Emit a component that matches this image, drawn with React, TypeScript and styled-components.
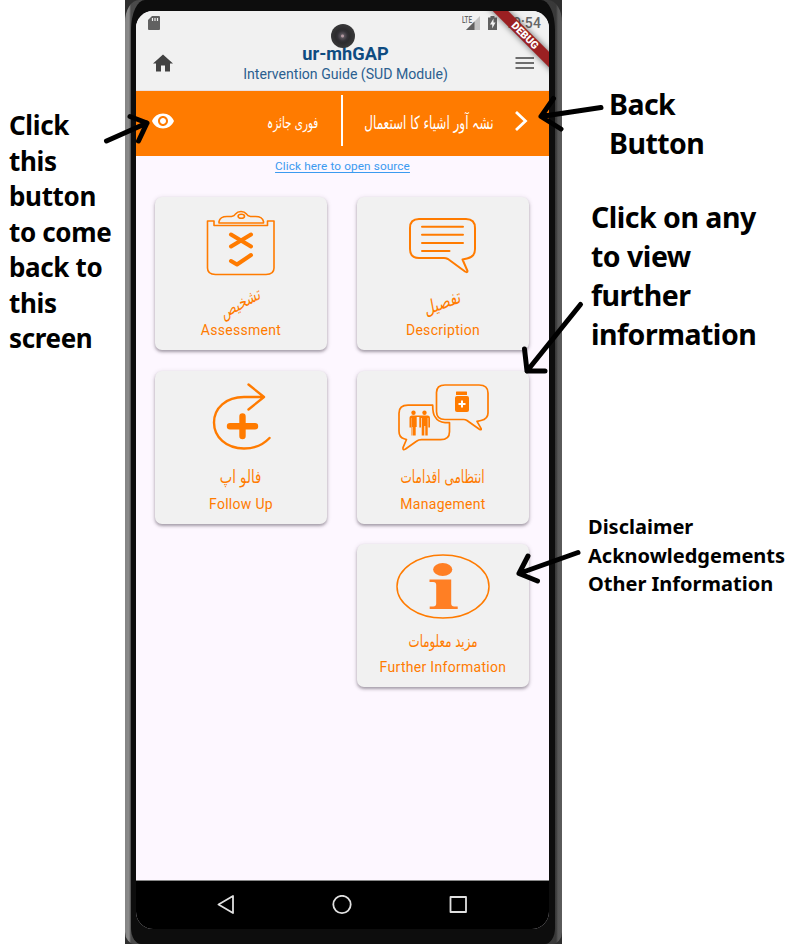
import React from "react";
import styled, { createGlobalStyle } from "styled-components";

const ORANGE = "#ff7b00";

const GlobalStyle = createGlobalStyle`
  * { box-sizing: border-box; }
  body { margin: 0; background: #fff; overflow: hidden; }
`;

const Page = styled.main`
  position: relative;
  display: grid;
  grid-template-columns: 125px 437px 1fr;
  width: 803px;
  height: 944px;
  background: #fff;
  overflow: hidden;
`;

const LeftNotes = styled.aside`
  padding: 108px 0 0 9px;
`;

const RightNotes = styled.aside`
  padding: 85px 0 0 26px;
`;

const Note = styled.p<{ $size: number; $line: number; $top?: number; $indent?: number; $spacing?: number }>`
  margin: ${(p) => p.$top ?? 0}px 0 0 ${(p) => p.$indent ?? 0}px;
  font-family: "Noto Sans", "Open Sans", sans-serif;
  font-weight: 700;
  font-size: ${(p) => p.$size}px;
  line-height: ${(p) => p.$line}px;
  letter-spacing: ${(p) => p.$spacing ?? 0}px;
  color: #000;
  white-space: pre;
`;

const Phone = styled.section`
  height: 944px;
  background: #2e2e2e;
`;

const Rim = styled.div`
  height: 944px;
  padding: 0 7px 0 6px;
  border-radius: 14px 14px 10px 10px / 22px 22px 12px 12px;
  background: linear-gradient(
    90deg,
    #858585 0, #8b8b8b 4px, #4a4a4a 6px,
    #393939 431px, #575757 433px, #5b5b5b 437px
  );
`;

const Glass = styled.div`
  height: 944px;
  padding: 11px 6px 15px 5px;
  border-radius: 14px 14px 10px 10px / 30px 30px 16px 16px;
  background: #0d0d0d;
`;

const Screen = styled.div`
  position: relative;
  display: flex;
  flex-direction: column;
  height: 918px;
  border-radius: 17px;
  background: #fdf7ff;
  overflow: hidden;
`;

const Header = styled.header`
  height: 80px;
  background: #f1f1f1;
  border-bottom: 1px solid #eadfe0;
`;

const StatusBar = styled.div`
  display: flex;
  align-items: center;
  height: 24px;
  padding: 0 8px 0 12px;
  font: 500 14px Roboto, sans-serif;
  color: #666;
`;

const StatusRight = styled.div`
  display: flex;
  align-items: center;
  margin-left: auto;
`;

const Clock = styled.span`
  margin-left: 7px;
  letter-spacing: 0.1px;
`;

const TitleRow = styled.div`
  display: flex;
  align-items: center;
  justify-content: space-between;
  height: 55px;
  padding: 0 12px 0 15px;
`;

const Titles = styled.div`
  padding-left: 3px;
  text-align: center;
  color: #0f4c81;
  font-family: Roboto, sans-serif;
`;

const Title = styled.h1`
  margin: 0 0 1px;
  font-size: 18.2px;
  line-height: 21px;
  font-weight: 700;
`;

const Subtitle = styled.div`
  font-size: 14.1px;
  line-height: 18px;
  color: #2b5f90;
`;

const Banner = styled.nav`
  display: grid;
  grid-template-columns: 55px 152px 166px 40px;
  align-items: center;
  height: 65px;
  background: ${ORANGE};
  color: #fff;
`;

const BannerCell = styled.div<{ $divider?: boolean }>`
  display: flex;
  align-items: center;
  justify-content: flex-end;
  height: 51px;
  margin-top: -6px;
  padding: 4px ${(p) => (p.$divider ? 23 : 15)}px 0 0;
  border-right: ${(p) => (p.$divider ? "2px solid #fff" : "0")};
`;

const IconCell = styled.div`
  display: flex;
  padding-left: 15px;
  margin-top: -5px;
`;

const ChevronCell = styled.div`
  display: flex;
  padding-left: 5px;
  margin-top: -5px;
`;

const Urdu = styled.span<{ $size: number; $stretch?: number; $lean?: number }>`
  display: inline-block;
  font-family: "DejaVu Sans", sans-serif;
  font-size: ${(p) => p.$size}px;
  line-height: 1.2;
  white-space: nowrap;
  transform-origin: ${(p) => (p.$lean === undefined ? "right" : "center")} center;
  transform: scale(${(p) => p.$stretch ?? 1}, 1.2) rotate(${(p) => p.$lean ?? 0}deg);
`;

const SourceLink = styled.a`
  align-self: center;
  margin-top: 3px;
  font: 400 11.8px/14px Roboto, sans-serif;
  letter-spacing: 0.1px;
  color: #3b9af0;
  text-decoration: underline;
  text-underline-offset: 2px;
`;

const Cards = styled.div`
  display: grid;
  grid-template-columns: 172px 172px;
  grid-template-rows: 153px 153px 143px;
  gap: 21px 30px;
  margin: 24px 0 0 19px;
`;

const Card = styled.article<{ $second?: boolean }>`
  display: flex;
  flex-direction: column;
  align-items: center;
  grid-column: ${(p) => (p.$second ? 2 : "auto")};
  margin-top: ${(p) => (p.$second ? -1 : 0)}px;
  margin-bottom: ${(p) => (p.$second ? 1 : 0)}px;
  border-radius: 7px;
  background: #f1f1f1;
  box-shadow: 0 2px 3px rgba(60, 50, 65, 0.38), 0 1px 5px rgba(60, 50, 65, 0.16);
  color: ${ORANGE};
`;

const UrduSlot = styled.div<{ $height: number }>`
  display: flex;
  align-items: center;
  justify-content: center;
  height: ${(p) => p.$height}px;
`;

const CardLabel = styled.div`
  font: 400 14px/18px Roboto, sans-serif;
  letter-spacing: 0.3px;
`;

const NavBar = styled.footer`
  display: flex;
  align-items: center;
  justify-content: space-between;
  height: 49px;
  margin-top: auto;
  padding: 0 81px;
  border-top: 1px solid #888;
  background: #000;
`;

const Camera = styled.div`
  position: absolute;
  left: 195px;
  top: 13px;
  width: 24px;
  height: 24px;
  border-radius: 50%;
  background: radial-gradient(circle at 48% 50%, #b49aa2 0 1px, #59535a 2px, #343237 5px, #2d2c2e 7px, #39393a 12px);
`;

const Ribbon = styled.div`
  position: absolute;
  left: 338.5px;
  top: 18.5px;
  width: 100px;
  height: 11px;
  transform: rotate(45deg);
  background: #9b2022;
  box-shadow: 0 0 6px rgba(0, 0, 0, 0.6);
  color: #fff;
  font: 900 10.5px/11px Roboto, sans-serif;
  text-align: center;
`;

const Arrows = styled.svg`
  position: absolute;
  inset: 0;
  pointer-events: none;
`;

const Lines = ({ w, h, children, box }: { w: number; h: number; box?: string; children: React.ReactNode }) => (
  <svg width={w} height={h} viewBox={box ?? `0 0 ${w} ${h}`} fill="none" stroke={ORANGE} strokeWidth="2" strokeLinecap="round" strokeLinejoin="round">
    {children}
  </svg>
);

const ClipboardIcon = () => (
  <Lines w={172} h={88} box="155 197 172 88">
    <g strokeWidth="1.6">
      <path d="M214 221h-6.500v47q0 6.500 8 6.500h50.500q8 0 8-6.500v-47h-6.500v4.500H214Z" />
      <path d="M219 223v-1.500q1-5 8-5h4.500q3-.5 4-2.500q2-2.500 5.500-2.500t5.500 2.500q1 2 4 2.500h5q7 0 8 5v1.500Z" />
      <ellipse cx="241.300" cy="216.200" rx="3.200" ry="2" />
    </g>
    <path d="m231 234.500 20 12m0-12-20 12M231 261l6 3.500 14-9.500" strokeWidth="4" />
  </Lines>
);

const DescriptionIcon = () => (
  <Lines w={172} h={88} box="357 197 172 88">
    <path d="M419 219h47q9 0 9 9v21q0 8-8 9.500l-4.500 1 5 11.500q0 2-2.500 .5l-17-12.500q-2-1-4-1H419q-9 0-9-9v-21q0-9 9-9Z" />
    <path d="M422 226.700h41M422 234.800h41M422 243h41M422 251h27.500" />
  </Lines>
);

const FollowIcon = () => (
  <Lines w={172} h={88} box="155 371 172 88">
    <path d="M248.500 384.500 264 397l-15.500 12.500M263 397H244c-18 0-30 11-30 25.500s12 26 30 26c11 0 19-3.500 25.500-10.500" strokeWidth="2.400" />
    <path d="M242.500 416.500v19.500M230 426.300h25" strokeWidth="6.400" />
  </Lines>
);

const ManagementIcon = () => (
  <Lines w={172} h={88} box="357 371 172 88">
    <g strokeWidth="1.700">
      <path d="M445 385h34q9 0 9 8v20q0 6-7 7.500l-4 .8 4 7q1 2.500-2 .7l-12-8.500q-1.500-1-3.500-1H445q-8.500 0-8.500-8v-19q0-7.500 8.500-7.500Z" />
      <path d="M432.700 405.200H408q-9 0-9 8v18q0 6 5 7.500l2.500 .8-3.500 8.200q-.5 3 2.500 1.300l11-7.800q2-1.500 5-1.500h19q9 0 9-8v-9H445q-7-.5-10-6-2.300-3-2.300-11.500Z" />
    </g>
    <g fill={ORANGE} stroke="none">
      <rect x="456" y="391.500" width="11" height="3.500" rx=".5" />
      <rect x="455" y="396" width="14" height="16" rx="2" />
      <circle cx="413.500" cy="412.700" r="2.200" />
      <circle cx="424.500" cy="412.700" r="2.200" />
      <path d="M412 415.500H428q2 0 2 2.500v9.500h-1.700V418h-.6v17.500h-2.400V426h-1v9.500h-2.600V418h-.7v9.500h-1.700V417h-2.600v10h-1v8.500H413V427h-.5v8.500h-1V418h-.3v9.500h-1.700V418q0-2.500 2.500-2.500Z" />
    </g>
    <path d="M462 400.500v7M458.500 404h7" stroke="#fff" strokeWidth="2" strokeLinecap="butt" />
  </Lines>
);

const InfoIcon = () => (
  <Lines w={172} h={81} box="357 544 172 81">
    <ellipse cx="443" cy="586.500" rx="46" ry="31.500" strokeWidth="1.500" />
    <g fill="#ff7f24" stroke="none">
      <ellipse cx="442.700" cy="569.500" rx="9.600" ry="6.500" />
      <path d="M429.500 579.500h21.700v24q0 3 3 3h3.500v2.500h-28v-2.500h3.500q3 0 3-3V585q0-3-3-3h-3.700Z" />
    </g>
  </Lines>
);

const items = [
  { label: "Assessment", urdu: "تشخیص", icon: <ClipboardIcon />, size: 15, stretch: 0.8, lean: -20, slot: 36 },
  { label: "Description", urdu: "تفصیل", icon: <DescriptionIcon />, size: 16, stretch: 0.85, lean: -15, slot: 36 },
  { label: "Follow Up", urdu: "فالو اپ", icon: <FollowIcon />, size: 15, stretch: 0.88, lean: 0, slot: 36 },
  { label: "Management", urdu: "انتظامی اقدامات", icon: <ManagementIcon />, size: 15, stretch: 0.8, lean: 0, slot: 36 },
  { label: "Further Information", urdu: "مزید معلومات", icon: <InfoIcon />, size: 14, stretch: 0.84, lean: 0, slot: 33 },
];

export default function App() {
  return (
    <>
      <GlobalStyle />
      <Page>
        <LeftNotes>
          <Note $size={26} $line={35.5} $spacing={-0.35}>{"Click\nthis\nbutton\nto come\nback to\nthis\nscreen"}</Note>
        </LeftNotes>
        <Phone>
          <Rim>
            <Glass>
              <Screen>
                <Header>
                  <StatusBar>
                    <svg width="12" height="14" viewBox="0 0 12 14" fill="#616161">
                      <path d="M4 0h7a1 1 0 0 1 1 1v12a1 1 0 0 1-1 1H1a1 1 0 0 1-1-1V4Z" />
                      <path d="M4.500 2v3M7 2v3M9.500 2v3" stroke="#f1f1f1" strokeWidth="1.200" />
                    </svg>
                    <StatusRight>
                      <svg width="36" height="16" viewBox="462 14 36 16">
                        <text x="462" y="22" fontFamily="Roboto" fontSize="8.500" fontWeight="500" fill="#666" textLength="10" lengthAdjust="spacingAndGlyphs">LTE</text>
                        <path d="M480 15v14h-14Z" fill="#c4c4c4" />
                        <path d="M474.500 20.500V29H466Z" fill="#616161" />
                        <path d="M490.500 15h4v1.500h2.500V29h-9V16.500h2.500Z" fill="#616161" />
                        <path d="m493.500 17.500-3.500 6h2.200v4l3.300-6h-2Z" fill="#f1f1f1" />
                      </svg>
                      <Clock>10:54</Clock>
                    </StatusRight>
                  </StatusBar>
                  <TitleRow>
                    <svg width="24" height="24" viewBox="0 0 24 24" fill="#424242">
                      <path d="M10 20.500v-6h4v6h5v-8h3L12 3.500 2 12.500h3v8Z" />
                    </svg>
                    <Titles>
                      <Title>ur-mhGAP</Title>
                      <Subtitle>Intervention Guide (SUD Module)</Subtitle>
                    </Titles>
                    <svg width="24" height="24" viewBox="0 0 24 24" stroke="#424242" strokeWidth="1.700">
                      <path d="M2.500 7h18.500M2.500 12h18.500M2.500 17h18.500" />
                    </svg>
                  </TitleRow>
                </Header>
                <Banner>
                  <IconCell>
                    <svg width="24" height="24" viewBox="0 0 24 24" fill="#fff">
                      <path d="M12 4.500C7 4.500 2.730 7.610 1 12c1.730 4.390 6 7.500 11 7.500s9.270-3.110 11-7.500c-1.730-4.390-6-7.500-11-7.500M12 17c-2.760 0-5-2.240-5-5s2.240-5 5-5 5 2.240 5 5-2.240 5-5 5m0-8c-1.660 0-3 1.340-3 3s1.340 3 3 3 3-1.340 3-3-1.340-3-3-3" />
                    </svg>
                  </IconCell>
                  <BannerCell $divider>
                    <Urdu dir="rtl" lang="ur" $size={13} $stretch={0.8}>فوری جائزہ</Urdu>
                  </BannerCell>
                  <BannerCell>
                    <Urdu dir="rtl" lang="ur" $size={15} $stretch={0.8}>نشہ آور اشیاء کا استعمال</Urdu>
                  </BannerCell>
                  <ChevronCell>
                    <svg width="15" height="22" viewBox="0 0 15 22" fill="none" stroke="#fff" strokeWidth="2.800">
                      <path d="m2 2 9.500 9L2 20" />
                    </svg>
                  </ChevronCell>
                </Banner>
                <SourceLink>Click here to open source</SourceLink>
                <Cards>
                  {items.map((item, i) => (
                    <Card key={item.label} $second={i === 4}>
                      {item.icon}
                      <UrduSlot $height={item.slot}>
                        <Urdu dir="rtl" lang="ur" $size={item.size} $stretch={item.stretch} $lean={item.lean}>{item.urdu}</Urdu>
                      </UrduSlot>
                      <CardLabel>{item.label}</CardLabel>
                    </Card>
                  ))}
                </Cards>
                <NavBar>
                  <svg width="18" height="20" viewBox="0 0 18 20" fill="none" stroke="#e0e0e0" strokeWidth="1.800" strokeLinejoin="round">
                    <path d="M16 1v17L1.500 9.500Z" />
                  </svg>
                  <svg width="20" height="20" viewBox="0 0 20 20" fill="none" stroke="#e0e0e0" strokeWidth="1.800">
                    <circle cx="10" cy="9.500" r="8.700" />
                  </svg>
                  <svg width="19" height="18" viewBox="0 0 19 18" fill="none" stroke="#e0e0e0" strokeWidth="1.800" strokeLinejoin="round">
                    <path d="M1.500 1h15.500v15H1.500Z" />
                  </svg>
                </NavBar>
                <Camera />
                <Ribbon>DEBUG</Ribbon>
              </Screen>
            </Glass>
          </Rim>
        </Phone>
        <RightNotes>
          <Note $size={28.5} $line={39} $indent={21} $spacing={-0.55}>{"Back\nButton"}</Note>
          <Note $size={28.5} $line={39} $top={35} $indent={3} $spacing={-0.5}>{"Click on any\nto view\nfurther\ninformation"}</Note>
          <Note $size={20} $line={28.5} $top={159}>{"Disclaimer\nAcknowledgements\nOther Information"}</Note>
        </RightNotes>
        <Arrows width="803" height="944" viewBox="0 0 803 944" fill="none" stroke="#000" strokeWidth="5" strokeLinecap="round" strokeLinejoin="round">
          <path d="M106.500 141 147 123M130 116.500 147 123 138.500 141" />
          <path d="M601 107.500 541 116.500M553.500 98.500 541 116.500 561 129" />
          <path d="M580.500 304.500 527 371M524.500 349 527 371H545" />
          <path d="M578 552.500 519 573.500M528 556 519 573.500 537.500 581" />
        </Arrows>
      </Page>
    </>
  );
}
